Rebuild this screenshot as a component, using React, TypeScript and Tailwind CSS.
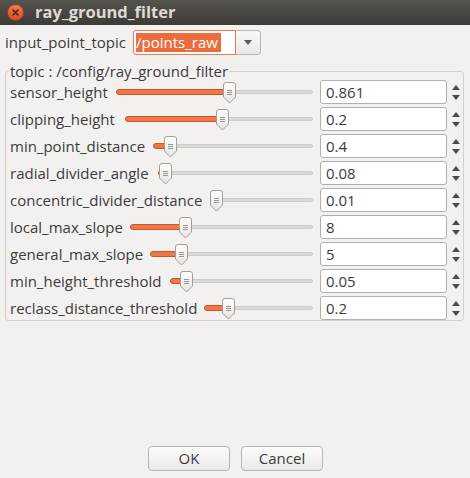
import React from "react";

// slider start x, handle centre x (page coords); slider ends at 313
const params = [
  { name: "sensor_height", value: "0.861", start: 116, knob: 229 },
  { name: "clipping_height", value: "0.2", start: 125, knob: 222 },
  { name: "min_point_distance", value: "0.4", start: 153, knob: 170 },
  { name: "radial_divider_angle", value: "0.08", start: 158, knob: 165 },
  { name: "concentric_divider_distance", value: "0.01", start: 210, knob: 216 },
  { name: "local_max_slope", value: "8", start: 130, knob: 185 },
  { name: "general_max_slope", value: "5", start: 150, knob: 181 },
  { name: "min_height_threshold", value: "0.05", start: 170, knob: 186 },
  { name: "reclass_distance_threshold", value: "0.2", start: 204, knob: 228 },
];

const SLIDER_END = 313;

function Handle() {
  return (
    <svg width="13" height="22" viewBox="0 0 13 22">
      <defs>
        <linearGradient id="hg" x1="0" y1="0" x2="0" y2="1">
          <stop offset="0" stopColor="#ffffff" />
          <stop offset="1" stopColor="#e6e4e1" />
        </linearGradient>
      </defs>
      <path
        d="M3 0.5 H10 A2.5 2.5 0 0 1 12.5 3 V15 L6.5 21 L0.5 15 V3 A2.5 2.5 0 0 1 3 0.5 Z"
        fill="url(#hg)"
        stroke="#a29e98"
      />
      <path d="M4 8.5 H9 M4 10.5 H9 M4 12.5 H9" stroke="#9a968f" strokeWidth="1" />
    </svg>
  );
}

function Slider({ start, knob }: { start: number; knob: number }) {
  const width = SLIDER_END - start;
  const pos = knob - start;
  return (
    <div className="relative h-[24px] shrink-0" style={{ width }}>
      <div className="absolute left-0 right-0 top-[10px] h-[4px] rounded-full bg-[#dcdad6] border border-[#cfccc8]" />
      <div
        className="absolute left-0 top-[9px] h-[6px] rounded-full bg-[#f07746] border border-[#c9562a]"
        style={{ width: pos }}
      />
      <div className="absolute top-[2px]" style={{ left: pos - 6 }}>
        <Handle />
      </div>
    </div>
  );
}

function SpinArrows() {
  return (
    <div className="w-[15px] h-[24px] flex flex-col items-center justify-center gap-[5px] ml-[1px]">
      <svg width="8" height="5" viewBox="0 0 8 5">
        <path d="M4 0 L8 5 H0 Z" fill="#4a4a48" />
      </svg>
      <svg width="8" height="5" viewBox="0 0 8 5">
        <path d="M0 0 H8 L4 5 Z" fill="#4a4a48" />
      </svg>
    </div>
  );
}

export default function App() {
  return (
    <div className="w-[470px] h-[478px] bg-[#f2f1f0] flex flex-col font-['Open_Sans',sans-serif] text-[15px] text-[#3c3c3c] overflow-hidden">
      {/* title bar */}
      <div className="h-[25px] bg-gradient-to-b from-[#55534e] to-[#3c3b37] flex items-center">
        <div className="ml-[7px] w-[17px] h-[17px] rounded-full bg-gradient-to-b from-[#f47a4d] to-[#df4a1d] border border-[#a63c17] flex items-center justify-center">
          <svg width="7" height="7" viewBox="0 0 7 7">
            <path d="M1 1 L6 6 M6 1 L1 6" stroke="#3a2a22" strokeWidth="1.6" strokeLinecap="round" />
          </svg>
        </div>
        <span className="ml-[11px] font-bold text-[16.5px] text-[#dfdbd2] leading-none">ray_ground_filter</span>
      </div>

      {/* topic selector */}
      <div className="mt-[5px] h-[25px] flex items-center pl-[5px]">
        <span className="w-[128px] whitespace-nowrap">input_point_topic</span>
        <div className="w-[103px] h-[25px] border border-[#f07746] bg-white rounded-l-[3px] flex items-center pl-[2px]">
          <span className="bg-[#ec6c3c] text-white leading-[19px] pr-[3px] whitespace-nowrap">/points_raw</span>
        </div>
        <div className="w-[25px] h-[25px] border border-l-0 border-[#b9b6b1] rounded-r-[4px] bg-gradient-to-b from-[#f8f8f7] to-[#e9e8e6] flex items-center justify-center">
          <svg width="8" height="5" viewBox="0 0 8 5">
            <path d="M0 0 H8 L4 5 Z" fill="#5a5a58" />
          </svg>
        </div>
      </div>

      {/* group box */}
      <div className="relative mt-[16px] ml-[5px] w-[459px] border border-[#d4d1cc] rounded-[3px] pt-[8px] flex flex-col gap-[3px]">
        <span className="absolute left-[3px] top-[-10px] px-[1px] bg-[#f2f1f0] leading-[18px] whitespace-nowrap">
          topic : /config/ray_ground_filter
        </span>
        {params.map((p) => (
          <div key={p.name} className="h-[24px] flex items-center">
            <span className="pl-[4px] whitespace-nowrap shrink-0" style={{ width: p.start - 6 }}>
              {p.name}
            </span>
            <Slider start={p.start} knob={p.knob} />
            <div className="ml-[7px] w-[128px] h-[24px] bg-white border border-[#b3b0ab] rounded-[3px] flex items-center pl-[5px]">
              {p.value}
            </div>
            <SpinArrows />
          </div>
        ))}
      </div>

      <div className="flex-1" />

      {/* buttons */}
      <div className="flex justify-center gap-[11px] pl-[1px] mb-[7px]">
        <button className="w-[82px] h-[25px] border border-[#b8b5b0] rounded-[4px] bg-gradient-to-b from-[#fbfbfb] to-[#ebeae8] text-[#3c3c3c]">
          OK
        </button>
        <button className="w-[82px] h-[25px] border border-[#b8b5b0] rounded-[4px] bg-gradient-to-b from-[#fbfbfb] to-[#ebeae8] text-[#3c3c3c]">
          Cancel
        </button>
      </div>
    </div>
  );
}
